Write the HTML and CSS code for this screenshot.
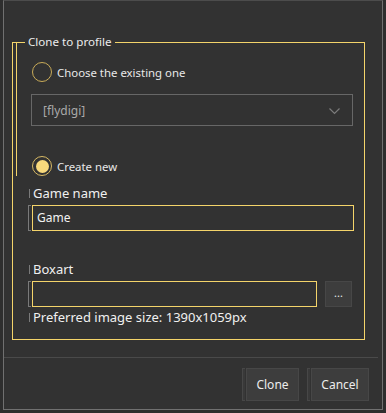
FILE: index.html
```html
<!DOCTYPE html>
<html lang="en">
<head>
    <meta charset="UTF-8">
    <meta name="viewport" content="width=device-width, initial-scale=1.0">
    <title>Clone to profile</title>
    <link rel="stylesheet" href="styles.css">
</head>
<body>
    <div class="window">
        <div class="group">
            <span class="group-title">Clone to profile</span>
            <span class="group-rail"></span>

            <label class="radio-row first">
                <span class="radio"></span>
                <span class="radio-text">Choose the existing one</span>
            </label>

            <div class="combo">
                <span class="combo-text">[flydigi]</span>
                <svg class="chevron" width="11" height="7" viewBox="0 0 11 7">
                    <path d="M0.5 0.5 L5.5 5.5 L10.5 0.5" fill="none" stroke="#7c7c7c" stroke-width="1.2"/>
                </svg>
            </div>

            <label class="radio-row second">
                <span class="radio checked"><span class="dot"></span></span>
                <span class="radio-text">Create new</span>
            </label>

            <div class="field-label name-label"><span class="tick"></span>Game name</div>
            <div class="field-row">
                <span class="bracket"></span>
                <div class="text-box wide">Game</div>
            </div>

            <div class="field-label boxart-label"><span class="tick"></span>Boxart</div>
            <div class="field-row">
                <span class="bracket"></span>
                <div class="text-box path"></div>
                <button class="browse-btn">...</button>
            </div>
            <div class="field-label hint"><span class="tick"></span>Preferred image size: 1390x1059px</div>
        </div>

        <div class="separator"></div>

        <div class="actions">
            <span class="btn-edge"></span>
            <button class="action-btn clone">Clone</button>
            <span class="btn-edge"></span>
            <button class="action-btn cancel">Cancel</button>
        </div>
    </div>
</body>
</html>
```

FILE: styles.css
```css
body {
    margin: 0;
    background: #2e2e2e;
    font-family: "Noto Sans", "Open Sans", sans-serif;
    color: #ececec;
}
.window {
    margin-left: 3px;
    width: 380px;
    height: 410px;
    box-sizing: border-box;
    border: 1px solid #707070;
    border-top-color: #4c4c4c;
    background: #323232;
    display: flex;
    flex-direction: column;
}
.group {
    position: relative;
    margin: 41px 0 0 8px;
    width: 353px;
    height: 298px;
    box-sizing: border-box;
    border: 1px solid #f4d46a;
    padding: 0 10px 0 19px;
    display: flex;
    flex-direction: column;
    align-items: flex-start;
}
.group-title {
    position: absolute;
    top: -9px;
    left: 12px;
    padding: 0 4px 0 3px;
    background: #323232;
    font-size: 11.6px;
    line-height: 16px;
}
.group-rail {
    position: absolute;
    left: 3px;
    top: -1px;
    width: 4px;
    height: 133px;
    border-left: 1px solid #f4d46a;
    border-top: 1px solid #f4d46a;
}
.radio-row {
    display: flex;
    align-items: center;
    gap: 5px;
    font-size: 11.4px;
    color: #e8e8e8;
}
.radio-row.first {
    margin-top: 19px;
}
.radio-row.second {
    margin-top: 30px;
}
.radio {
    width: 20px;
    height: 20px;
    box-sizing: border-box;
    border: 1.5px solid #c9ab58;
    border-radius: 50%;
    display: flex;
    align-items: center;
    justify-content: center;
}
.radio.checked {
    border-color: #d7b964;
}
.dot {
    width: 13px;
    height: 13px;
    border-radius: 50%;
    background: #f8d97c;
}
.combo {
    margin: 12px 0 0 -1px;
    width: 322px;
    height: 32px;
    box-sizing: border-box;
    border: 1px solid #676767;
    display: flex;
    align-items: center;
    justify-content: space-between;
    padding: 0 12px 0 11px;
    font-size: 12px;
    color: #a9a9a9;
}
.chevron {
    margin-top: 2px;
}
.field-label {
    display: flex;
    align-items: center;
    margin-left: -3px;
    font-size: 13px;
    line-height: 18px;
    color: #f0f0f0;
}
.tick {
    width: 1px;
    height: 9px;
    background: #7a7a7a;
    margin-right: 3px;
}
.name-label {
    margin-top: 8px;
}
.boxart-label {
    margin-top: 29px;
}
.hint {
    margin-top: 1px;
}
.field-row {
    display: flex;
    align-items: stretch;
    margin: 3px 0 0 -4px;
}
.bracket {
    width: 2px;
    border: 1px solid #7a7a7a;
    border-right: none;
    margin-right: 1px;
}
.text-box {
    box-sizing: border-box;
    height: 26px;
    border: 1px solid #f4d46a;
    padding: 0 4px;
    font-size: 12px;
    line-height: 24px;
    color: #f2f2f2;
}
.text-box.wide {
    width: 322px;
}
.text-box.path {
    width: 285px;
}
.browse-btn {
    margin-left: 8px;
    width: 27px;
    height: 26px;
    box-sizing: border-box;
    background: #3d3d3d;
    border: 1px solid #474747;
    color: #e6e6e6;
    font-family: inherit;
    font-size: 11px;
    padding: 0 0 4px;
}
.separator {
    margin: 17px 4px 0 0;
    height: 1px;
    background: #4a4a4a;
}
.actions {
    display: flex;
    justify-content: flex-end;
    margin: 10px 13px 0 0;
    height: 33px;
}
.btn-edge {
    width: 2px;
    border: 1px solid #474747;
    border-right: none;
    background: #393939;
    margin-right: 1px;
}
.action-btn {
    box-sizing: border-box;
    height: 33px;
    background: #3d3d3d;
    border: 1px solid #474747;
    color: #ececec;
    font-family: inherit;
    font-size: 12px;
    padding: 0;
}
.action-btn.clone {
    width: 53px;
    margin-right: 8px;
}
.action-btn.cancel {
    width: 58px;
}
```
